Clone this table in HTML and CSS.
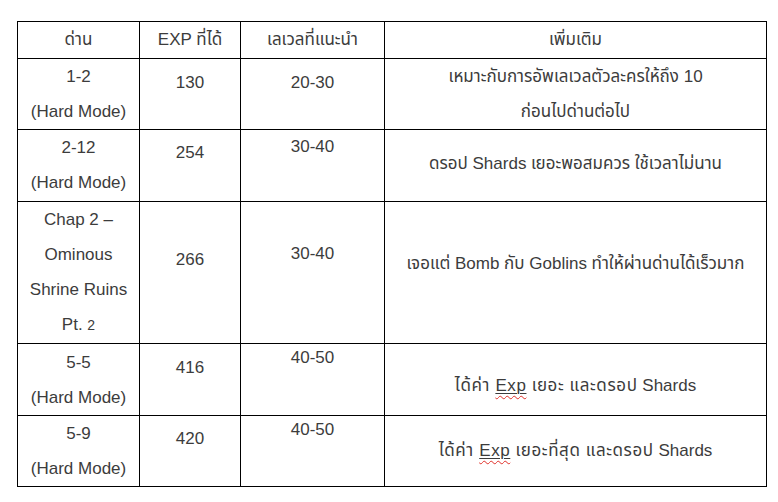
FILE: index.html
```html
<!DOCTYPE html>
<html lang="th">
<head>
<meta charset="utf-8">
<link rel="stylesheet" href="styles.css">
</head>
<body>
<div class="page">
<table class="grid">
  <colgroup>
    <col class="c1"><col class="c2"><col class="c3"><col class="c4">
  </colgroup>
  <tr class="head">
    <td>ด่าน</td>
    <td>EXP ที่ได้</td>
    <td>เลเวลที่แนะนำ</td>
    <td>เพิ่มเติม</td>
  </tr>
  <tr class="r71">
    <td>1-2<br>(Hard Mode)</td>
    <td class="p6">130</td>
    <td class="p6">20-30</td>
    <td>เหมาะกับการอัพเลเวลตัวละครให้ถึง 10<br>ก่อนไปด่านต่อไป</td>
  </tr>
  <tr class="r72">
    <td>2-12<br>(Hard Mode)</td>
    <td class="p5">254</td>
    <td class="tight p3">30-40</td>
    <td class="p16">ดรอป Shards เยอะพอสมควร ใช้เวลาไม่นาน</td>
  </tr>
  <tr class="r142">
    <td>Chap 2 –<br>Ominous<br>Shrine Ruins<br>Pt. <span class="small">2</span></td>
    <td class="p40">266</td>
    <td class="p34">30-40</td>
    <td class="p44">เจอแต่ Bomb กับ Goblins ทำให้ผ่านด่านได้เร็วมาก</td>
  </tr>
  <tr class="r72">
    <td class="p1">5-5<br>(Hard Mode)</td>
    <td class="p6">416</td>
    <td class="tight">40-50</td>
    <td class="p24"><span class="wide">ได้ค่า <span class="spell"><span class="ul">Exp</span></span> เยอะ และดรอป</span> Shards</td>
  </tr>
  <tr class="r71">
    <td>5-9<br>(Hard Mode)</td>
    <td class="p5">420</td>
    <td class="tight">40-50</td>
    <td class="p17"><span class="wide">ได้ค่า <span class="spell"><span class="ul">Exp</span></span> เยอะที่สุด และดรอป</span> Shards</td>
  </tr>
</table>
</div>
</body>
</html>
```

FILE: styles.css
```css
html, body {
  margin: 0;
  padding: 0;
  background: #ffffff;
}

.page {
  padding: 21px 0 0 17px;
}

.grid {
  border-collapse: collapse;
  table-layout: fixed;
  width: 749px;
  font-family: "Liberation Sans", Arial, "Noto Sans Thai", "Noto Sans", sans-serif;
  font-size: 17px;
  color: #3c3c3c;
}

.c1 { width: 122px; }
.c2 { width: 101px; }
.c3 { width: 144px; }
.c4 { width: 382px; }

.grid td {
  border: 1px solid #000000;
  text-align: center;
  vertical-align: top;
  padding: 0;
  line-height: 35px;
  white-space: nowrap;
}

.head { height: 37px; }
.r71 { height: 71px; }
.r72 { height: 72px; }
.r142 { height: 142px; }

.grid td.p1 { padding-top: 1px; }
.grid td.p3 { padding-top: 3px; }
.grid td.p5 { padding-top: 5px; }
.grid td.p6 { padding-top: 6px; }
.grid td.p16 { padding-top: 16px; }
.grid td.p17 { padding-top: 17px; }
.grid td.p24 { padding-top: 24px; }
.grid td.p34 { padding-top: 34px; }
.grid td.p40 { padding-top: 40px; }
.grid td.p44 { padding-top: 44px; }

.grid td.tight { line-height: 27px; }

.small { font-size: 14px; }

.wide { letter-spacing: 0.6px; }

.spell {
  text-decoration: underline wavy #e0302a;
  text-decoration-thickness: 1px;
  text-underline-offset: 4px;
}

.ul {
  text-decoration: underline solid #3c3c3c;
  text-decoration-thickness: 1px;
  text-underline-offset: 2px;
}
```
